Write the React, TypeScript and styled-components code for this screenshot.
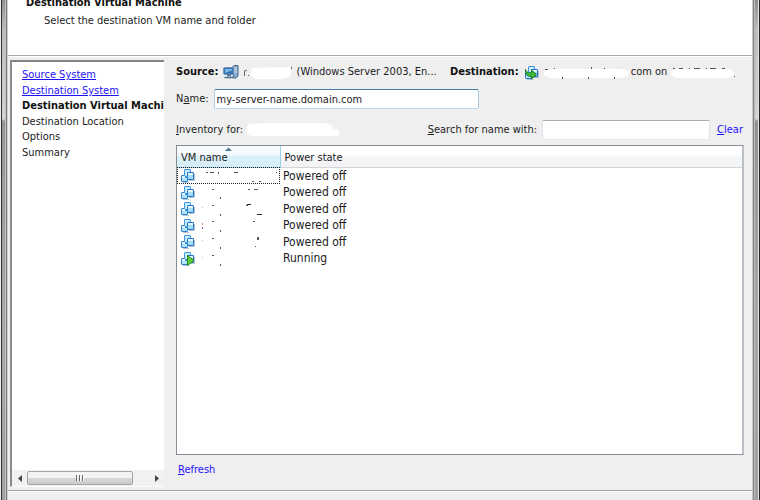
import React from "react";
import styled, { createGlobalStyle, css } from "styled-components";

const GlobalStyle = createGlobalStyle`
  * { box-sizing: border-box; }
  html, body, #root { height: 100%; margin: 0; }
  body {
    overflow: hidden;
    background: #efefef;
    color: #1c1c1c;
    font-family: "DejaVu Sans Condensed", "Noto Sans", sans-serif;
    font-size: 11px;
    line-height: 16px;
  }
`;

const Window = styled.div`
  display: grid;
  grid-template-columns: 8px minmax(0, 1fr) 8px;
  height: 100vh;
`;

const Edge = styled.div<{ $side: "left" | "right" }>`
  background: ${({ $side }) =>
    $side === "left"
      ? "linear-gradient(90deg, #eee 0 1px, #333 1px 2px, transparent 2px 5px, #c4c4c4 5px 6px, #777 6px 7px, #d0d0d0 7px)"
      : "linear-gradient(90deg, #c8c8c8 0 1px, #858585 1px 2px, #b8b8b8 2px 3px, transparent 3px 6px, #e4e4e4 6px 7px, #262626 7px)"},
    linear-gradient(180deg, #8f8f8f 0, #bcbcbc 30px, #d2d2d2 119px, #949494 121px, #a8a8a8 320px, #a0a0a0 100%);
`;

const Dialog = styled.div`
  display: flex;
  flex-direction: column;
  min-width: 0;
`;

const Header = styled.header`
  height: 56px;
  flex: none;
  overflow: hidden;
  padding: 0 18px;
  background: #fff;
  border-bottom: 1px solid #a9a7a8;
`;

const Title = styled.h1`
  margin: -5px 0 2px;
  font-size: 11px;
  line-height: 16px;
  font-weight: bold;
  color: #111;
`;

const Subtitle = styled.p`
  margin: 0 18px;
`;

const Body = styled.div`
  flex: 1;
  min-height: 0;
  display: grid;
  grid-template-columns: 154px minmax(0, 1fr);
  gap: 12px;
  padding: 3px 8px 3px 2px;
  border-top: 1px solid #fff;
`;

const Footer = styled.footer`
  height: 10px;
  flex: none;
  border-top: 1px solid #a2a2a2;
  box-shadow: inset 0 1px #fff;
`;

const Sidebar = styled.nav`
  display: flex;
  flex-direction: column;
  min-width: 0;
  background: #fff;
  border-top: 2px solid #858387;
  border-left: 2px solid #8b8b8b;
  border-bottom: 1px solid #fff;
`;

const Steps = styled.ol`
  flex: 1;
  margin: 0;
  padding: 5px 0 0 10px;
  list-style: none;
  overflow: hidden;
  white-space: nowrap;
`;

const Step = styled.li<{ $current?: boolean }>`
  height: 16px;
  &:nth-child(even) { height: 15px; }
  ${({ $current }) => $current && css`font-weight: bold; color: #111;`}
`;

const Link = styled.a<{ $plain?: boolean }>`
  color: #1d12fa;
  text-decoration: ${({ $plain }) => ($plain ? "none" : "underline")};
`;

const ScrollBar = styled.div`
  display: flex;
  height: 16px;
  background: #f1f1f1;
`;

const ScrollArrow = styled.button`
  width: 15px;
  padding: 0;
  border: 0;
  background: none;
  display: grid;
  place-items: center;
`;

const ScrollThumb = styled.button`
  width: 106px;
  margin: 1px auto 1px 0;
  padding: 0;
  border: 1px solid #a3a3a3;
  border-radius: 2px;
  background: linear-gradient(#f4f4f4 0 45%, #d9dadb 50%, #c9cacc);
  display: grid;
  place-items: center;
`;

const Main = styled.main`
  display: flex;
  flex-direction: column;
  min-width: 0;
`;

const Summary = styled.div`
  display: flex;
  align-items: center;
  height: 24px;
  white-space: nowrap;
  svg { flex: none; }
`;

const Endpoint = styled.div<{ $basis?: string }>`
  display: flex;
  align-items: center;
  flex: ${({ $basis }) => $basis ?? "1 1 0"};
  min-width: 0;
  overflow: hidden;
`;

const Strong = styled.strong`
  margin-right: 5px;
  color: #111;
`;

const Field = styled.div`
  display: flex;
  align-items: center;
  height: 30px;
  white-space: nowrap;
`;

const InventoryRow = styled(Field)`
  margin-top: 1px;
`;

const Key = styled.u`
  text-underline-offset: 1px;
`;

const TextInput = styled.input<{ $active?: boolean }>`
  height: 20px;
  width: ${({ $active }) => ($active ? "265px" : "168px")};
  margin-left: 5px;
  padding: 0 2px;
  border: 1px solid;
  border-color: ${({ $active }) => ($active ? "#3f7fb1 #a4c9e3 #b7d9ed #b5cfe7" : "#abadb3 #e2e3ea #e3e9ef #e2e3ea")};
  border-radius: 2px;
  background: #fff;
  color: inherit;
  font: inherit;
  outline: none;
`;

const SearchGroup = styled.div`
  display: flex;
  align-items: center;
  margin-left: auto;
  padding-right: 1px;
  a { margin-left: 7px; }
`;

const ListBox = styled.div`
  flex: 1;
  min-height: 0;
  overflow: hidden;
  background: #fff;
  border: 1px solid #8a8c95;
  border-right: 2px solid #b9bdc4;
`;

const Table = styled.table`
  width: 100%;
  border-collapse: collapse;
  table-layout: fixed;
`;

const HeadCell = styled.th<{ $sorted?: boolean }>`
  position: relative;
  width: ${({ $sorted }) => ($sorted ? "103px" : "auto")};
  height: 21px;
  padding: 3px 4px 0;
  text-align: left;
  font-weight: normal;
  line-height: 16px;
  border-bottom: 1px solid ${({ $sorted }) => ($sorted ? "#9ad2e8" : "#d5d5d5")};
  background: ${({ $sorted }) =>
    $sorted ? "linear-gradient(#f4fafd 0 40%, #dcf0f8 50%, #d5edf7)" : "linear-gradient(#fff 0 40%, #f5f6f8 50%, #f1f2f4)"};
  ${({ $sorted }) => $sorted && css`border-right: 1px solid #9ad2e8;`}
`;

const SortMark = styled.svg`
  position: absolute;
  top: 1px;
  left: 48px;
`;

const Row = styled.tr`
  height: 17px;
  &:nth-child(even) { height: 16px; }
`;

const Cell = styled.td`
  padding: 1px 3px 0;
  font-size: 12px;
  line-height: 15px;
`;

const NameCell = styled.td<{ $focused?: boolean }>`
  padding: 0 0 0 3px;
  line-height: 0;
  ${({ $focused }) => $focused && css`outline: 1px dotted #222; outline-offset: -1px;`}
  svg { vertical-align: top; }
`;

const Actions = styled.div`
  height: 32px;
  flex: none;
  padding: 7px 2px;
`;

const VmIcon = ({ mode = "off" }: { mode?: "off" | "running" | "move" }) => (
  <svg width="16" height="15" viewBox="0 0 16 15" aria-hidden="true">
    <path d="M3 14.500h6M9 12.500h5.500V6" fill="none" stroke="#7890ac" strokeOpacity=".55" />
    <rect x="1.500" y="7.500" width="6" height="6" rx=".5" fill="#b4e4fc" stroke="#2b7fcf" />
    <rect x="4.500" y="1.500" width="6" height="7" rx=".5" fill="#c6ecfe" stroke="#3f95dd" />
    <rect x="7.500" y="4.500" width="6" height="7" rx=".5" fill="#a6dcfb" stroke="#2272c4" />
    <path d="M5 9.500h2.500V8" fill="none" stroke="#3f95dd" />
    <path d="M8 5h5v2H8zM2 8h3v2H2z" fill="#e8f8ff" />
    {mode === "running" && <path d="M7.500 4.500v10l6.500-5z" fill="#5fd03c" stroke="#228a1c" strokeLinejoin="round" />}
    {mode === "move" && (
      <path d="M1.500 4.500c1 3 3 3.500 6 3V5l5 4.500-5 4.500v-2.500c-4 0-6.500-2-6-7z" fill="#3fba36" stroke="#157326" strokeLinejoin="round" />
    )}
  </svg>
);

const ComputerIcon = () => (
  <svg width="16" height="16" viewBox="0 0 16 16" aria-hidden="true">
    <path d="M9.500 3l1.500-1.500h4v10.500l-2 2h-2.500z" fill="#86a9cc" stroke="#48688c" />
    <path d="M11.500 4h2.500M11.500 6h2.500M11.500 8h2.500" stroke="#dbe8f3" />
    <rect x=".5" y="3.500" width="10" height="7" rx="1" fill="#3374b4" stroke="#6f95bc" />
    <path d="M2 5h7v1.500L2 9z" fill="#7db5e2" />
    <path d="M4 11.500h4M1.500 13.500h9" stroke="#52708e" strokeWidth="1.500" />
  </svg>
);

type Speck = [number, number, number, number, string?];

const Specks = ({ width, items }: { width: number; items: Speck[] }) => (
  <svg width={width} height="15" viewBox={`0 0 ${width} 15`} aria-hidden="true">
    {items.map(([x, y, w, h, color = "#555"], i) => (
      <rect key={i} x={x} y={y} width={w} height={h} fill={color} />
    ))}
  </svg>
);

const SourceMask = () => (
  <svg width="54" height="16" viewBox="0 0 54 16" aria-hidden="true">
    <path d="M1.500 12V6.500M2 7l2-1" stroke="#666" fill="none" />
    <rect x="5" y="11" width="1" height="1" fill="#555" />
    <path d="M10 4l37-1 2 3-2 7-8 2H13l-5-3V7z" fill="#fff" />
    <path d="M48.500 2.500v3" stroke="#777" />
  </svg>
);

const HostMask = () => (
  <svg width="88" height="16" viewBox="0 0 88 16" aria-hidden="true">
    <path d="M1 7l5-2h74l6 3-1 4-6 2H7l-6-3z" fill="#fff" />
    <path d="M2 5.500h3M11.500 4v1M19.500 13v2M45.500 13v2M48.500 3v2M61.500 4v1M71.500 13v2" stroke="#555" />
  </svg>
);

const AddressMask = () => (
  <svg width="70" height="16" viewBox="-3 0 70 16" aria-hidden="true">
    <path d="M1 7l5-2h53l5 3-1 4-5 2H5l-4-3z" fill="#fff" />
    <path d="M3 4.500h2M9 4.500h4M19 4.500h1M24 4.500h6M36 4.500h1M40 4.500h6M52 4.500h3" stroke="#555" />
    <rect x="64" y="12" width="1" height="1" fill="#555" />
  </svg>
);

const InventoryMask = () => (
  <svg width="98" height="16" viewBox="-3 0 98 16" aria-hidden="true">
    <path d="M3 2l15-1h62l6 2 1 4 6 1v5l-2 1H5l-4-2V5z" fill="#fff" />
  </svg>
);

const vms: { state: string; specks: Speck[] }[] = [
  { state: "Powered off", specks: [[10, 4, 2, 1], [14, 4, 4, 1], [22, 4, 1, 2], [38, 4, 4, 1], [56, 13, 2, 1], [63, 13, 2, 1], [80, 4, 1, 1]] },
  { state: "Powered off", specks: [[16, 4, 2, 1], [24, 12, 1, 2], [52, 4, 2, 1], [58, 4, 4, 1]] },
  { state: "Powered off", specks: [[6, 6, 1, 1, "#f0b070"], [16, 4, 2, 1], [24, 13, 1, 2], [51, 3, 4, 1, "#222"], [50, 4, 2, 1], [61, 13, 5, 1, "#222"]] },
  { state: "Powered off", specks: [[6, 5, 1, 2, "#e08040"], [6, 9, 1, 2, "#a06090"], [16, 3, 2, 1], [24, 12, 1, 2], [57, 3, 2, 1]] },
  { state: "Powered off", specks: [[6, 6, 1, 1, "#f0b070"], [16, 4, 2, 1], [24, 13, 1, 2], [61, 3, 2, 3], [59, 12, 1, 1]] },
  { state: "Running", specks: [[6, 6, 1, 1, "#f0b070"], [16, 4, 2, 1], [24, 13, 1, 2]] },
];

export default function App() {
  return (
    <>
      <GlobalStyle />
      <Window>
        <Edge $side="left" />
        <Dialog>
          <Header>
            <Title>Destination Virtual Machine</Title>
            <Subtitle>Select the destination VM name and folder</Subtitle>
          </Header>
          <Body>
            <Sidebar aria-label="Steps">
              <Steps>
                <Step><Link href="#source">Source System</Link></Step>
                <Step><Link href="#destination">Destination System</Link></Step>
                <Step $current aria-current="step">Destination Virtual Machine</Step>
                <Step>Destination Location</Step>
                <Step>Options</Step>
                <Step>Summary</Step>
              </Steps>
              <ScrollBar>
                <ScrollArrow aria-label="Scroll left">
                  <svg width="4" height="7" viewBox="0 0 4 7"><path d="M4 0v7L0 3.500z" fill="#444" /></svg>
                </ScrollArrow>
                <ScrollThumb aria-label="Scroll position">
                  <svg width="8" height="6" viewBox="0 0 8 6"><path d="M.5 0v6M3.500 0v6M6.500 0v6" stroke="#666" /><path d="M1.500 1v5M4.500 1v5M7.500 1v5" stroke="#fff" /></svg>
                </ScrollThumb>
                <ScrollArrow aria-label="Scroll right">
                  <svg width="4" height="7" viewBox="0 0 4 7"><path d="M0 0v7l4-3.500z" fill="#444" /></svg>
                </ScrollArrow>
              </ScrollBar>
            </Sidebar>
            <Main>
              <Summary>
                <Endpoint $basis="0 0 274px">
                  <Strong>Source:</Strong>
                  <ComputerIcon />
                  &nbsp;
                  <SourceMask />
                  <span>(Windows Server 2003, En...</span>
                </Endpoint>
                <Endpoint>
                  <Strong>Destination:</Strong>
                  <VmIcon mode="move" />
                  &nbsp;
                  <HostMask />
                  <span>com on</span>
                  <AddressMask />
                </Endpoint>
              </Summary>
              <Field>
                <label htmlFor="vm-name">N<Key>a</Key>me:</label>
                <TextInput id="vm-name" $active defaultValue="my-server-name.domain.com" />
              </Field>
              <InventoryRow>
                <span><Key>I</Key>nventory for:</span>
                <InventoryMask />
                <SearchGroup>
                  <label htmlFor="search"><Key>S</Key>earch for name with:</label>
                  <TextInput id="search" />
                  <Link $plain href="#clear"><Key>C</Key>lear</Link>
                </SearchGroup>
              </InventoryRow>
              <ListBox>
                <Table>
                  <thead>
                    <tr>
                      <HeadCell $sorted aria-sort="ascending">
                        VM name
                        <SortMark width="7" height="4" viewBox="0 0 7 4"><path d="M0 4l3.500-3.500L7 4z" fill="#4b7a96" /></SortMark>
                      </HeadCell>
                      <HeadCell>Power state</HeadCell>
                    </tr>
                  </thead>
                  <tbody>
                    {vms.map((vm, i) => (
                      <Row key={i}>
                        <NameCell $focused={i === 0}>
                          <VmIcon mode={vm.state === "Running" ? "running" : "off"} />
                          <Specks width={82} items={vm.specks} />
                        </NameCell>
                        <Cell>{vm.state}</Cell>
                      </Row>
                    ))}
                  </tbody>
                </Table>
              </ListBox>
              <Actions>
                <Link $plain href="#refresh"><Key>R</Key>efresh</Link>
              </Actions>
            </Main>
          </Body>
          <Footer />
        </Dialog>
        <Edge $side="right" />
      </Window>
    </>
  );
}
